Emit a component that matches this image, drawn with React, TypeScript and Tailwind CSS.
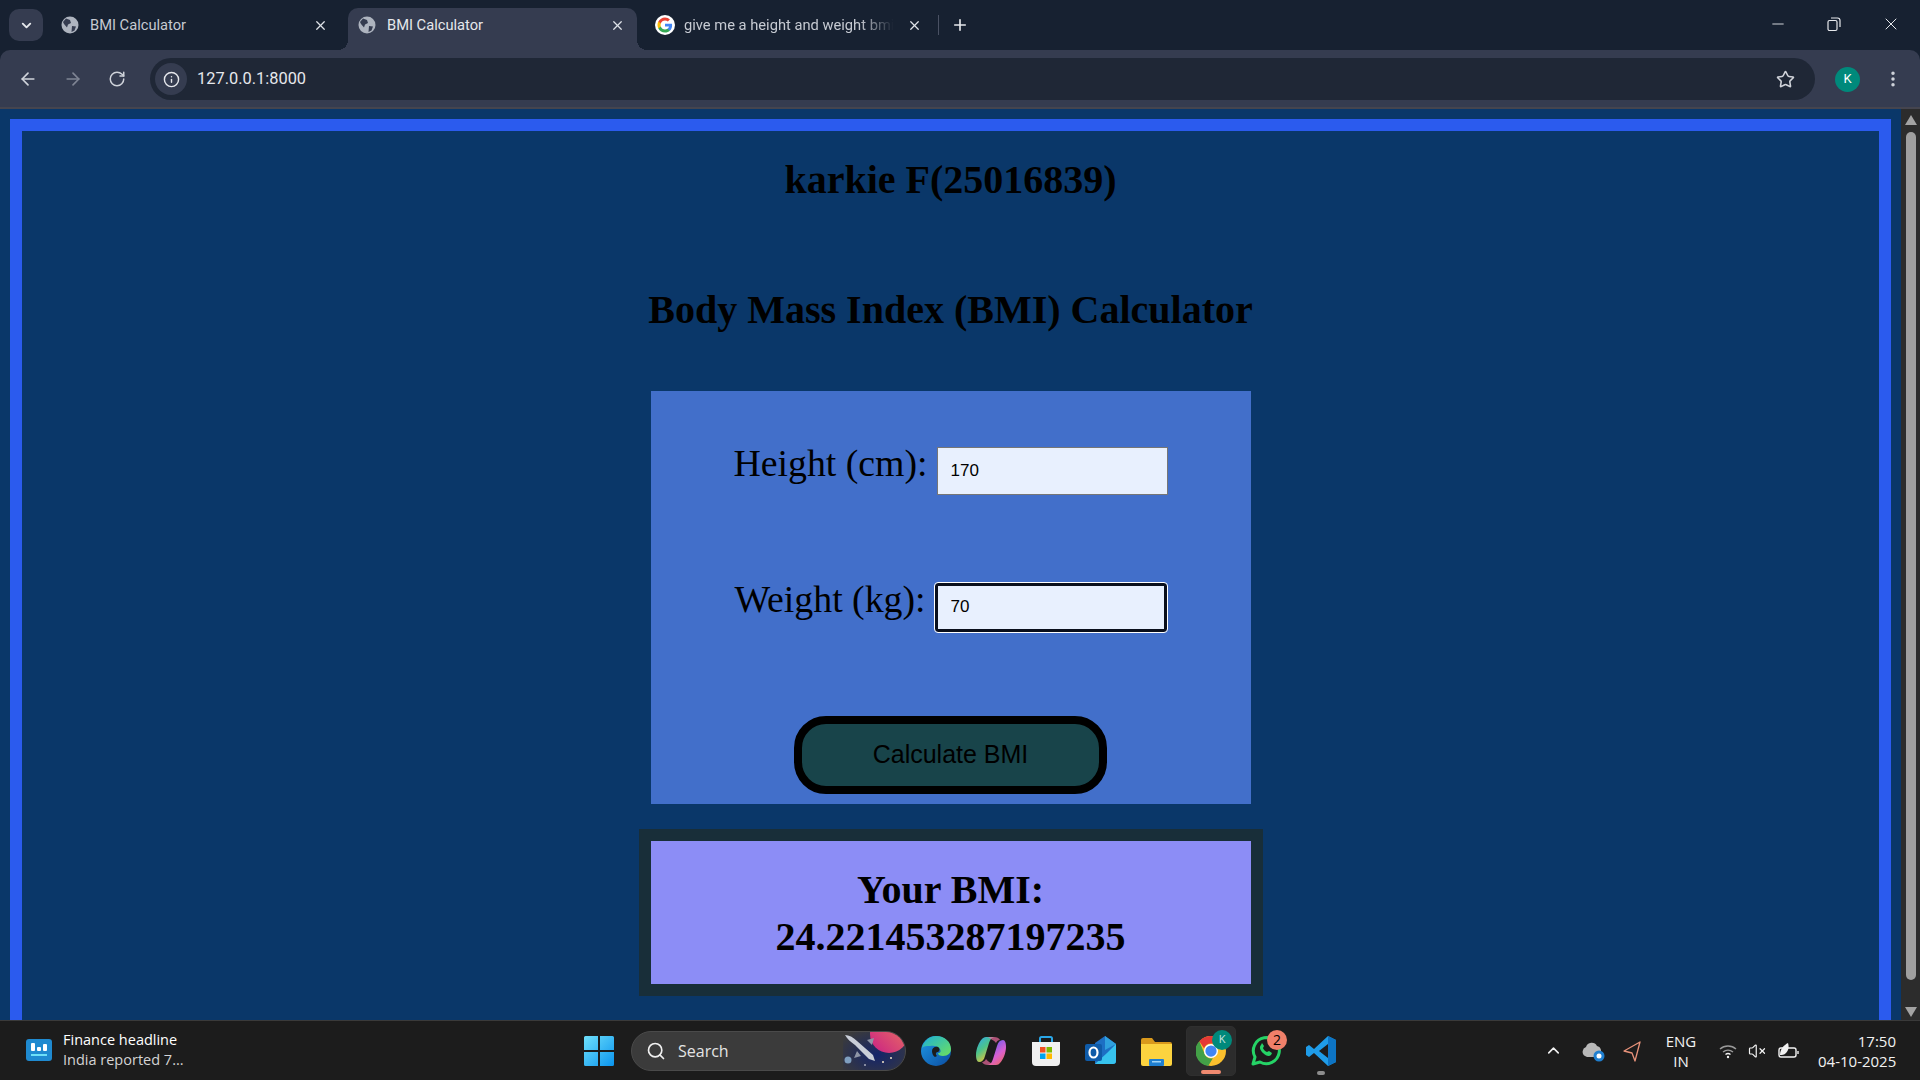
import { ArrowLeft, ArrowRight, ChevronDown, ChevronUp, EllipsisVertical, Info, Minus, Plus, RotateCw, Search, Star, X, VolumeX } from "lucide-react";

function Globe() {
  return (
    <svg width="18" height="18" viewBox="0 0 18 18" className="shrink-0">
      <circle cx="9" cy="9" r="8.5" fill="#aeb4bf" />
      <path d="M5 2.500l4 1.500 1 3-3 1.500-1 3-3-3.500-1-2zM11 10l4 .5-1.500 4-3 1.500z" fill="#353c50" />
    </svg>
  );
}

function GoogleG() {
  return (
    <svg width="20" height="20" viewBox="0 0 48 48" className="shrink-0">
      <circle cx="24" cy="24" r="24" fill="#fff" />
      <path fill="#4285F4" d="M41 24.500c0-1.300-.1-2.500-.3-3.700H24v7h9.600c-.4 2.200-1.700 4.100-3.600 5.400v4.500h5.800C39.200 34.500 41 30 41 24.500z" />
      <path fill="#34A853" d="M24 42c4.900 0 8.900-1.600 11.800-4.300L30 33.200c-1.600 1.100-3.600 1.700-6 1.700-4.600 0-8.600-3.100-10-7.300H8v4.600C11 38 17 42 24 42z" />
      <path fill="#FBBC05" d="M14 27.600c-.4-1.100-.6-2.300-.6-3.600s.2-2.500.6-3.600v-4.600H8C6.700 18.200 6 21 6 24s.7 5.800 2 8.200z" />
      <path fill="#EA4335" d="M24 13.100c2.600 0 5 .9 6.800 2.700l5.100-5.100C32.900 7.800 28.900 6 24 6 17 6 11 10 8 15.800l6 4.600c1.400-4.200 5.400-7.300 10-7.300z" />
    </svg>
  );
}

function Tab({ title, active, icon, fade, gap }: { title: string; active?: boolean; icon: React.ReactNode; fade?: boolean; gap: string }) {
  return (
    <div className={`relative flex h-[42px] w-[289px] items-center rounded-t-[10px] pb-[8px] pl-[10px] pr-[12px] ${gap} ${active ? "bg-[#353c50] text-[#e6e8ec]" : "text-[#c6cad2]"}`}>
      {active && (
        <>
          <div className="absolute bottom-0 left-[-10px] h-[10px] w-[10px] bg-[radial-gradient(circle_at_0_0,transparent_10px,#353c50_10px)]" />
          <div className="absolute bottom-0 right-[-10px] h-[10px] w-[10px] bg-[radial-gradient(circle_at_100%_0,transparent_10px,#353c50_10px)]" />
        </>
      )}
      {icon}
      <span className={`flex-1 overflow-hidden whitespace-nowrap text-[14.7px] ${fade ? "[mask-image:linear-gradient(90deg,#000_82%,transparent_98%)]" : ""}`}>{title}</span>
      <X size={15} strokeWidth={2} className="shrink-0 text-[#dfe2e8]" />
    </div>
  );
}

function TabStrip() {
  return (
    <div className="flex h-[50px] items-end gap-2 bg-[#172131] font-['Roboto',sans-serif]">
      <div className="mb-[9px] ml-[9px] flex h-[32px] w-[34px] items-center justify-center rounded-[10px] bg-[#353c50]">
        <ChevronDown size={15} strokeWidth={3} className="text-[#e6e8ec]" />
      </div>
      <Tab title="BMI Calculator" icon={<Globe />} gap="gap-[11px]" />
      <Tab title="BMI Calculator" active icon={<Globe />} gap="gap-[11px]" />
      <Tab title="give me a height and weight bmi" icon={<GoogleG />} fade gap="gap-[9px]" />
      <div className="mb-[15px] ml-[-4px] h-[20px] w-px bg-[#4a5163]" />
      <Plus size={18} strokeWidth={2.200} className="mb-[16px] ml-[4px] text-[#e6e8ec]" />
      <div className="mb-[16px] ml-auto flex items-center gap-[39px] pr-[19px] text-[#e6e8ec]">
        <Minus size={18} strokeWidth={1.200} />
        <svg width="16" height="16" viewBox="0 0 16 16" fill="none" stroke="currentColor" strokeWidth="1.200">
          <rect x="2" y="4.500" width="9" height="10" rx="1.500" />
          <path d="M5 2h6.500A2.500 2.500 0 0 1 14 4.500V11" />
        </svg>
        <X size={20} strokeWidth={1.200} />
      </div>
    </div>
  );
}

function Toolbar() {
  return (
    <div className="flex h-[59px] items-center rounded-t-[10px] border-b-2 border-[#45454f] bg-[#353c50] pt-[1px] font-['Roboto',sans-serif]">
      <div className="flex items-center gap-[25px] pl-[18px] pr-[24px]">
        <ArrowLeft size={20} strokeWidth={2} className="text-[#cfd3da]" />
        <ArrowRight size={20} strokeWidth={2} className="text-[#7f8594]" />
        <RotateCw size={18} strokeWidth={2} className="text-[#cfd3da]" />
      </div>
      <div className="flex h-[42px] flex-1 items-center rounded-full bg-[#1f2736] pl-[5px] text-[#e6e8ec]">
        <div className="flex h-[32px] w-[32px] items-center justify-center rounded-full bg-[#353c50]">
          <Info size={17} strokeWidth={2} />
        </div>
        <span className="ml-[10px] text-[16.400px]">127.0.0.1:8000</span>
        <Star size={19} strokeWidth={2} className="ml-auto mr-[20px] text-[#d0d3da]" />
      </div>
      <div className="ml-[20px] flex h-[25px] w-[25px] items-center justify-center rounded-full bg-[#00897b] text-[13px] text-white">K</div>
      <EllipsisVertical size={20} strokeWidth={2.200} className="ml-[23px] mr-[17px] text-[#cfd3da]" />
    </div>
  );
}

function Field({ label, value, focused }: { label: string; value: string; focused?: boolean }) {
  return (
    <div className="flex items-baseline justify-center gap-[9px]">
      <label className="text-[37.800px]">{label}</label>
      <input
        readOnly
        value={value}
        className={`bg-[#e8f0fe] pl-[13px] font-['Liberation_Sans',sans-serif] text-[17px] text-black ${focused ? "h-[49px] w-[232px] rounded-[3px] border-[3px] border-[#0a0f1c] outline-1 outline-white" : "h-[48px] w-[231px] border border-[#767676]"}`}
      />
    </div>
  );
}

function PageBody() {
  return (
    <div className="min-w-0 flex-1 overflow-hidden bg-[#0a3769] p-[10px] font-['Liberation_Serif',serif] text-black">
      <div className="h-[1000px] border-[12px] border-[#2b5bee]">
        <h1 className="mt-[26px] text-center text-[40px] font-bold leading-[46px]">karkie F(25016839)</h1>
        <h1 className="mt-[84px] text-center text-[40px] font-bold leading-[46px]">Body Mass Index (BMI) Calculator</h1>
        <div className="mx-auto mt-[58px] flex h-[413px] w-[600px] flex-col bg-[#426fca] pt-[44px]">
          <Field label="Height (cm):" value="170" />
          <div className="mt-[76px]">
            <Field label="Weight (kg):" value="70" focused />
          </div>
          <button className="mx-auto mt-[84px] h-[78px] w-[313px] shrink-0 rounded-[32px] border-[8px] border-black bg-[#18444a] font-['Liberation_Sans',sans-serif] text-[25px] text-black">
            Calculate BMI
          </button>
        </div>
        <div className="mx-auto mt-[25px] w-[624px] border-[12px] border-[#182e39] bg-[#8c8df6] pb-[24px] pt-[25px] text-center text-[40px] font-bold leading-[47px]">
          Your BMI:
          <br />
          24.221453287197235
        </div>
      </div>
    </div>
  );
}

function Scrollbar() {
  return (
    <div className="flex w-[19px] shrink-0 flex-col items-center bg-[#2c2c2c] pt-[6px]">
      <div className="h-0 w-0 border-x-[6px] border-b-[10px] border-x-transparent border-b-[#a3a3a3]" />
      <div className="mt-[7px] h-[848px] w-[10px] rounded-full bg-[#9f9f9f]" />
      <div className="mb-[3px] mt-auto h-0 w-0 border-x-[6px] border-t-[10px] border-x-transparent border-t-[#a3a3a3]" />
    </div>
  );
}

function WindowsLogo() {
  return (
    <svg width="30" height="30" viewBox="0 0 30 30">
      <defs>
        <linearGradient id="win" x1="0" y1="0" x2="1" y2="1">
          <stop offset="0" stopColor="#6fe0fb" />
          <stop offset="1" stopColor="#0a94ee" />
        </linearGradient>
      </defs>
      <path fill="url(#win)" d="M0 1.500A1.500 1.500 0 0 1 1.500 0H14v14H0zM16 0h12.500A1.500 1.500 0 0 1 30 1.500V14H16zM0 16h14v14H1.500A1.500 1.500 0 0 1 0 28.500zM16 16h14v12.500a1.500 1.500 0 0 1-1.500 1.500H16z" />
    </svg>
  );
}

function SearchArt() {
  return (
    <svg width="62" height="40" viewBox="0 0 62 40" className="ml-auto">
      <defs>
        <radialGradient id="space" cx="0.55" cy="0.6" r="0.7">
          <stop offset="0" stopColor="#14246a" />
          <stop offset="1" stopColor="#3b3b3b" />
        </radialGradient>
        <linearGradient id="planet" x1="0" y1="1" x2="1" y2="0">
          <stop offset="0" stopColor="#c81e86" />
          <stop offset="1" stopColor="#f0805a" />
        </linearGradient>
      </defs>
      <rect width="62" height="40" fill="url(#space)" />
      <circle cx="46" cy="3" r="19" fill="url(#planet)" />
      <path d="M2 4c4 0 8 2 12 6l16 14 2 6-6-2L12 14C8 11 4 8 2 4z" fill="#c9ced8" />
      <path d="M14 20l-3 7 7-2zM24 9l7-2-2 7z" fill="#8e95a6" />
      <circle cx="5" cy="29" r="3.500" fill="#7f9fc0" />
      <circle cx="40" cy="31" r="1" fill="#f5e6c8" />
      <circle cx="48" cy="27" r="1" fill="#f5e6c8" />
      <circle cx="22" cy="34" r="0.800" fill="#fff" />
    </svg>
  );
}

function TaskIcons() {
  return (
    <div className="flex items-center">
      {/* edge */}
      <div className="flex w-[55px] justify-center">
        <svg width="30" height="30" viewBox="0 0 30 30">
          <defs>
            <linearGradient id="edgeA" x1="0" y1="0" x2="1" y2="1">
              <stop offset="0" stopColor="#1cb0d8" />
              <stop offset="1" stopColor="#6ee05c" />
            </linearGradient>
            <linearGradient id="edgeB" x1="0" y1="0" x2="1" y2="1">
              <stop offset="0" stopColor="#1f9ae6" />
              <stop offset="1" stopColor="#0b4ca0" />
            </linearGradient>
          </defs>
          <circle cx="15" cy="15" r="15" fill="url(#edgeB)" />
          <path d="M1 12C3 5 8 0 15 0c9 0 15 6 15 13 0 4-3 7-8 7-3 0-5-1-5-3 3 0 3-2 2-4-2-3-6-4-10-3-4 0-6 0-8 2z" fill="url(#edgeA)" />
          <path d="M11 15c0-3 3-5 6-4 2 1 2 4 0 5-2 0-3 2-1 4l-2 1c-2-1-3-4-3-6z" fill="#1c1c1c" />
        </svg>
      </div>
      {/* copilot */}
      <div className="flex w-[55px] justify-center">
        <svg width="30" height="30" viewBox="0 0 30 30">
          <defs>
            <linearGradient id="cop1" x1="0" y1="0" x2="0.6" y2="1">
              <stop offset="0" stopColor="#2fa6ee" />
              <stop offset="0.5" stopColor="#4cc38a" />
              <stop offset="1" stopColor="#f7c531" />
            </linearGradient>
            <linearGradient id="cop2" x1="0.4" y1="0" x2="1" y2="1">
              <stop offset="0" stopColor="#6e5cf0" />
              <stop offset="0.5" stopColor="#d860d0" />
              <stop offset="1" stopColor="#f26a4a" />
            </linearGradient>
          </defs>
          <path d="M10 1h8c-3 1-4 3-5 6l-4 13c-1 4-3 6-6 6-2 0-3-3-3-7 0-6 3-13 6-16 1-1 2-2 4-2z" fill="url(#cop1)" />
          <path d="M20 29h-8c3-1 4-3 5-6l4-13c1-4 3-6 6-6 2 0 3 3 3 7 0 6-3 13-6 16-1 1-2 2-4 2z" fill="url(#cop2)" />
          <path d="M12 1h6c3 0 5 1 6 3-2 0-3 1-4 3-2-3-6-4-8-6zM18 29h-6c-3 0-5-1-6-3 2 0 3-1 4-3 2 3 6 4 8 6z" fill="#e96a9c" opacity="0.700" />
        </svg>
      </div>
      {/* store */}
      <div className="flex w-[55px] justify-center">
        <svg width="30" height="32" viewBox="0 0 30 32">
          <path d="M9 7V3.500A1.500 1.500 0 0 1 10.500 2h9A1.500 1.500 0 0 1 21 3.500V7" fill="none" stroke="#2aa7e8" strokeWidth="2" />
          <path d="M1 7h28v20a4 4 0 0 1-4 4H5a4 4 0 0 1-4-4z" fill="#f0f0f0" />
          <rect x="9" y="12" width="5.500" height="5.500" fill="#f25022" />
          <rect x="15.500" y="12" width="5.500" height="5.500" fill="#7fba00" />
          <rect x="9" y="18.500" width="5.500" height="5.500" fill="#00a4ef" />
          <rect x="15.500" y="18.500" width="5.500" height="5.500" fill="#ffb900" />
        </svg>
      </div>
      {/* outlook */}
      <div className="flex w-[55px] justify-center">
        <svg width="32" height="32" viewBox="0 0 32 32">
          <path d="M10 8 20 1l11 8v17a3 3 0 0 1-3 3H10z" fill="#1d6fc4" />
          <path d="M20 1l11 8-11 6z" fill="#2fa0de" />
          <path d="M10 29l12-11 9-9v17a3 3 0 0 1-3 3z" fill="#37c3ee" />
          <rect x="0" y="9" width="17" height="17" rx="2" fill="#0f5ba8" />
          <ellipse cx="8.500" cy="17.500" rx="4" ry="5" fill="none" stroke="#fff" strokeWidth="2.200" />
        </svg>
      </div>
      {/* explorer */}
      <div className="flex w-[55px] justify-center">
        <svg width="32" height="32" viewBox="0 0 32 32">
          <path d="M1 5a2 2 0 0 1 2-2h9l3 4h15a2 2 0 0 1 2 2v4H1z" fill="#d9991c" />
          <path d="M1 9h31v20a2 2 0 0 1-2 2H3a2 2 0 0 1-2-2z" fill="#fcd33f" />
          <rect x="9" y="24" width="15" height="7" rx="1" fill="#1f7fd0" />
          <rect x="12" y="26" width="9" height="1.500" fill="#9ed4f7" />
        </svg>
      </div>
      {/* chrome, running */}
      <div className="relative ml-[3px] flex h-[50px] w-[50px] items-center justify-center rounded-[5px] border border-[#2f2f2f] bg-[#2c2c2c]">
        <svg width="30" height="30" viewBox="0 0 32 32">
          <circle cx="16" cy="16" r="16" fill="#fbc02d" />
          <path d="M16 0a16 16 0 0 1 13.900 8H16a8 8 0 0 0-7.400 5L3.500 5.500A16 16 0 0 1 16 0z" fill="#e53935" />
          <path d="M3.500 5.500 9.600 20A8 8 0 0 0 18 23.800L13 32A16 16 0 0 1 3.500 5.500z" fill="#43a047" />
          <circle cx="16" cy="16" r="7.500" fill="#fff" />
          <circle cx="16" cy="16" r="6" fill="#4285f4" />
        </svg>
        <div className="absolute right-[3px] top-[3px] flex h-[20px] w-[20px] items-center justify-center rounded-full bg-[#00897b] text-[11px] text-[#c8e6e2]">K</div>
        <div className="absolute bottom-[1px] h-[4px] w-[20px] rounded-full bg-[#f08a70]" />
      </div>
      {/* whatsapp */}
      <div className="relative flex w-[60px] justify-center">
        <svg width="32" height="32" viewBox="0 0 32 32" fill="none">
          <path d="M3 29l2-7a13 13 0 1 1 5 5z" stroke="#25d366" strokeWidth="3" strokeLinejoin="round" />
          <path d="M11 10c-2 2-1 5 2 8s6 4 8 2l1-2-3-2-2 1c-1 0-4-3-4-4l1-2-2-3z" fill="#25d366" />
        </svg>
        <div className="absolute right-[9px] top-[-5px] flex h-[20px] w-[20px] items-center justify-center rounded-full bg-[#f0806a] text-[14px] text-black">2</div>
      </div>
      {/* vs code */}
      <div className="relative flex w-[50px] justify-center">
        <svg width="32" height="32" viewBox="0 0 32 32">
          <path d="M23 1l8 4v22l-8 4L9 18l-5 4-3-2v-8l3-2 5 4z" fill="#1f9ce8" />
          <path d="M23 9v14l-9-7z" fill="#1c1c1c" />
          <path d="M23 1l8 4v22l-8 4z" fill="#0d74c4" />
        </svg>
        <div className="absolute bottom-[-8px] h-[4px] w-[8px] rounded-full bg-[#8d8d8d]" />
      </div>
    </div>
  );
}

function Tray() {
  return (
    <div className="ml-auto flex items-center text-[#f2f2f2]">
      <ChevronUp size={19} strokeWidth={2} />
      <svg width="24" height="22" viewBox="0 0 24 22" className="ml-[19px]">
        <path d="M3 16a5 5 0 0 1 1-9 6 6 0 0 1 11-1 5 5 0 0 1 3 8v3H5z" fill="#b8b8b8" />
        <circle cx="17" cy="16" r="5.500" fill="#1f7fd0" />
        <circle cx="17" cy="16" r="2.500" fill="#fff" />
      </svg>
      <svg width="20" height="22" viewBox="0 0 20 22" fill="none" stroke="#e8927a" strokeWidth="1.300" className="ml-[16px]">
        <path d="M18 2 2 11l8 2 3 8z" strokeLinejoin="round" />
      </svg>
      <div className="ml-[17px] w-[44px] text-center text-[15px] leading-[20px]">
        <div>ENG</div>
        <div>IN</div>
      </div>
      <svg width="18" height="16" viewBox="0 0 18 16" fill="none" stroke="#9a9a9a" strokeWidth="1.400" className="ml-[16px]">
        <path d="M1 6a12 12 0 0 1 16 0M4 9a8 8 0 0 1 10 0" />
        <path d="M6.500 11.500a4 4 0 0 1 5 0" stroke="#f2f2f2" />
        <circle cx="9" cy="14" r="1.200" fill="#f2f2f2" stroke="none" />
      </svg>
      <VolumeX size={18} strokeWidth={1.600} className="ml-[11px]" />
      <svg width="22" height="20" viewBox="0 0 22 20" fill="none" stroke="#f2f2f2" strokeWidth="1.400" className="ml-[11px]">
        <rect x="2" y="7" width="17" height="9" rx="2" />
        <path d="M21 10v3" />
        <path d="M3 14c0-6 4-10 8-12 1 3 1 7-2 10-2 2-4 2-6 2z" fill="#f2f2f2" stroke="none" />
      </svg>
      <div className="ml-[19px] w-[78px] whitespace-nowrap text-right text-[15px] leading-[20px]">
        <div>17:50</div>
        <div>04-10-2025</div>
      </div>
    </div>
  );
}

function Taskbar() {
  return (
    <div className="relative flex h-[60px] shrink-0 items-center border-t border-[#3a3a3a] bg-[#1c1c1c] pl-[26px] pr-[24px] font-['Open_Sans',sans-serif] text-white">
      <div className="flex w-[558px] items-center gap-[11px] pb-[2px]">
        <svg width="26" height="22" viewBox="0 0 26 22">
          <rect width="26" height="22" rx="3" fill="#1f8ad0" />
          <rect x="5" y="4" width="4" height="8" rx="1" fill="#fff" />
          <rect x="11" y="8" width="4" height="4" rx="1" fill="#fff" />
          <rect x="17" y="5" width="4" height="7" rx="1" fill="#fff" />
          <rect x="5" y="15" width="16" height="2" fill="#6ee0f8" />
        </svg>
        <div className="text-[14.500px] leading-[20px]">
          <div>Finance headline</div>
          <div className="text-[#d4d4d4]">India reported 7...</div>
        </div>
      </div>
      <div className="flex items-center">
        <WindowsLogo />
        <div className="ml-[17px] mr-[2px] flex h-[40px] w-[275px] items-center overflow-hidden rounded-full border border-[#4a4a4a] bg-[#3b3b3b] pl-[14px]">
          <Search size={20} strokeWidth={2} className="text-[#f0f0f0]" />
          <span className="ml-[12px] text-[16px] text-[#e4e4e4]">Search</span>
          <SearchArt />
        </div>
        <TaskIcons />
      </div>
      <Tray />
    </div>
  );
}

export default function App() {
  return (
    <div className="flex h-screen flex-col overflow-hidden bg-[#172131]">
      <TabStrip />
      <Toolbar />
      <div className="flex min-h-0 flex-1">
        <PageBody />
        <Scrollbar />
      </div>
      <Taskbar />
    </div>
  );
}
